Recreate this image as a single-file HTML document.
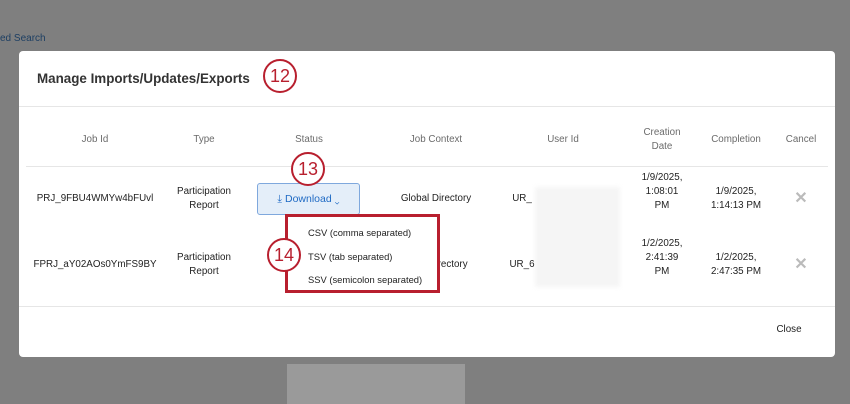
<!DOCTYPE html>
<html><head><style>
body{margin:0;width:850px;height:404px;background:#7f7f7f;position:relative;overflow:hidden;font-family:"Liberation Sans",sans-serif;}
.a{position:absolute}
.modal{left:19px;top:51px;width:816px;height:306px;background:#fff;border-radius:4px}
.c{position:absolute;text-align:center;font-size:9.8px;color:#222;line-height:14px;transform:translate(-50%,-50%);white-space:nowrap}
.h{color:#6b6b6b}
.circ{position:absolute;width:30px;height:30px;border:2.5px solid #b81f2e;border-radius:50%;background:#fff;color:#b81f2e;font-size:18px;text-align:center;line-height:30px;box-sizing:content-box}
</style></head><body>
<div class="a" style="left:0;top:33px;font-size:10px;color:#1d3f63">ed Search</div>
<div class="a" style="left:287px;top:364px;width:178px;height:40px;background:#9a9a9a"></div>
<div class="a modal">
<div class="a" style="left:18px;top:20px;font-size:13.4px;font-weight:bold;color:#333">Manage Imports/Updates/Exports</div>
<div class="a" style="left:0;top:55px;width:816px;height:1px;background:#e6e6e6"></div>
<div class="a" style="left:7px;top:115px;width:802px;height:1px;background:#e6e6e6"></div>
<div class="a" style="left:0;top:255px;width:816px;height:1px;background:#e6e6e6"></div>
<div class="a" style="left:516px;top:136px;width:85px;height:100px;background:#f5f5f5;filter:blur(2px)"></div>
</div>
<div class="c h" style="left:95px;top:140px">Job Id</div>
<div class="c h" style="left:204px;top:140px">Type</div>
<div class="c h" style="left:309px;top:140px">Status</div>
<div class="c h" style="left:436px;top:140px">Job Context</div>
<div class="c h" style="left:563px;top:140px">User Id</div>
<div class="c h" style="left:662px;top:140px">Creation<br>Date</div>
<div class="c h" style="left:736px;top:140px">Completion</div>
<div class="c h" style="left:801px;top:140px">Cancel</div>

<div class="c" style="left:95px;top:199px">PRJ_9FBU4WMYw4bFUvl</div>
<div class="c" style="left:204px;top:199px">Participation<br>Report</div>
<div class="a" style="left:257px;top:183px;width:103px;height:32px;background:#e4eef9;border:1px solid #7fa8dd;border-radius:3px;box-sizing:border-box;color:#1f6ac4;font-size:10.5px;line-height:30px;text-align:center">⤓ Download ⌄</div>
<div class="c" style="left:436px;top:199px">Global Directory</div>
<div class="c" style="left:522px;top:199px">UR_</div>
<div class="c" style="left:662px;top:192px">1/9/2025,<br>1:08:01<br>PM</div>
<div class="c" style="left:736px;top:199px">1/9/2025,<br>1:14:13 PM</div>
<div class="c" style="left:801px;top:199px;color:#bbb;font-size:16px;font-weight:bold">✕</div>

<div class="c" style="left:95px;top:265px">FPRJ_aY02AOs0YmFS9BY</div>
<div class="c" style="left:204px;top:265px">Participation<br>Report</div>
<div class="c" style="left:448px;top:265px">Directory</div>
<div class="c" style="left:522px;top:265px">UR_6</div>
<div class="c" style="left:662px;top:258px">1/2/2025,<br>2:41:39<br>PM</div>
<div class="c" style="left:736px;top:265px">1/2/2025,<br>2:47:35 PM</div>
<div class="c" style="left:801px;top:265px;color:#bbb;font-size:16px;font-weight:bold">✕</div>
<div class="c" style="left:789px;top:330px">Close</div>

<div class="a" style="left:285px;top:214px;width:155px;height:79px;border:3px solid #b81f2e;background:#fff;box-sizing:border-box;font-size:9.4px;color:#222">
<div class="a" style="left:20px;top:10px">CSV (comma separated)</div>
<div class="a" style="left:20px;top:34px">TSV (tab separated)</div>
<div class="a" style="left:20px;top:57px">SSV (semicolon separated)</div>
</div>
<div class="circ" style="left:263px;top:59px">12</div>
<div class="circ" style="left:291px;top:152px">13</div>
<div class="circ" style="left:267px;top:238px">14</div>
</body></html>
